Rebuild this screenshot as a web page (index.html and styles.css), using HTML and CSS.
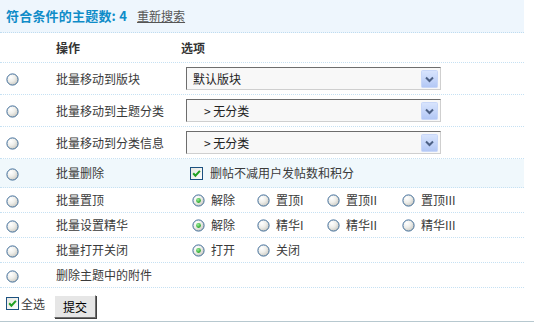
FILE: index.html
```html
<!DOCTYPE html>
<html lang="zh-CN">
<head>
<meta charset="utf-8">
<title>批量管理</title>
<link rel="stylesheet" href="styles.css">
</head>
<body>
<svg class="defs" width="0" height="0" aria-hidden="true">
  <defs>
    <radialGradient id="rfill" cx="35%" cy="30%" r="75%">
      <stop offset="0" stop-color="#ffffff"/>
      <stop offset="0.5" stop-color="#eeeeea"/>
      <stop offset="1" stop-color="#c9c8c1"/>
    </radialGradient>
    <radialGradient id="rdot" cx="40%" cy="35%" r="70%">
      <stop offset="0" stop-color="#9ef09e"/>
      <stop offset="1" stop-color="#189a18"/>
    </radialGradient>
    <linearGradient id="cfill" x1="0" y1="0" x2="1" y2="1">
      <stop offset="0" stop-color="#e6e6df"/>
      <stop offset="1" stop-color="#ffffff"/>
    </linearGradient>
    <linearGradient id="afill" x1="0" y1="0" x2="0" y2="1">
      <stop offset="0" stop-color="#d9e5fd"/>
      <stop offset="1" stop-color="#b2c7f5"/>
    </linearGradient>
    <symbol id="radio" viewBox="0 0 13 13">
      <circle cx="6.5" cy="6.5" r="5.6" fill="url(#rfill)" stroke="#3f6c98" stroke-width="1"/>
    </symbol>
    <symbol id="radio-on" viewBox="0 0 13 13">
      <circle cx="6.5" cy="6.5" r="5.6" fill="url(#rfill)" stroke="#3f6c98" stroke-width="1"/>
      <circle cx="6.5" cy="6.5" r="2.4" fill="url(#rdot)"/>
    </symbol>
    <symbol id="check-on" viewBox="0 0 13 13">
      <rect x="0.5" y="0.5" width="12" height="12" fill="url(#cfill)" stroke="#1c5180"/>
      <path d="M3.2 6.3 L5.4 8.7 L9.9 3.9" fill="none" stroke="#21a121" stroke-width="2"/>
    </symbol>
    <symbol id="arrow" viewBox="0 0 17 18">
      <rect x="0.5" y="0.5" width="16" height="17" rx="1" fill="url(#afill)" stroke="#c8d7f8"/>
      <path d="M5 7.5 L8.5 11 L12 7.5" fill="none" stroke="#4d6185" stroke-width="2"/>
    </symbol>
  </defs>
</svg>
<div class="page">
  <form class="panel">
    <div class="title">
      <strong>符合条件的主题数: 4</strong>
      <a href="#">重新搜索</a>
    </div>

    <div class="row head">
      <span></span>
      <span>操作</span>
      <span class="head-opts">选项</span>
    </div>

    <div class="row tall">
      <span class="pick"><svg class="radio"><use href="#radio"/></svg></span>
      <span class="label">批量移动到版块</span>
      <span class="opts">
        <span class="select"><span class="val">默认版块</span><svg class="arrow"><use href="#arrow"/></svg></span>
      </span>
    </div>

    <div class="row tall">
      <span class="pick"><svg class="radio"><use href="#radio"/></svg></span>
      <span class="label">批量移动到主题分类</span>
      <span class="opts">
        <span class="select"><span class="val indent">&gt; 无分类</span><svg class="arrow"><use href="#arrow"/></svg></span>
      </span>
    </div>

    <div class="row tall">
      <span class="pick"><svg class="radio"><use href="#radio"/></svg></span>
      <span class="label">批量移动到分类信息</span>
      <span class="opts">
        <span class="select"><span class="val indent">&gt; 无分类</span><svg class="arrow"><use href="#arrow"/></svg></span>
      </span>
    </div>

    <div class="row mid hl">
      <span class="pick"><svg class="radio"><use href="#radio"/></svg></span>
      <span class="label">批量删除</span>
      <span class="opts">
        <span class="chk"><svg class="check"><use href="#check-on"/></svg>删帖不减用户发帖数和积分</span>
      </span>
    </div>

    <div class="row">
      <span class="pick"><svg class="radio"><use href="#radio"/></svg></span>
      <span class="label">批量置顶</span>
      <span class="opts radios">
        <span class="opt w1"><svg class="radio"><use href="#radio-on"/></svg>解除</span>
        <span class="opt w2"><svg class="radio"><use href="#radio"/></svg>置顶I</span>
        <span class="opt w3"><svg class="radio"><use href="#radio"/></svg>置顶II</span>
        <span class="opt"><svg class="radio"><use href="#radio"/></svg>置顶III</span>
      </span>
    </div>

    <div class="row">
      <span class="pick"><svg class="radio"><use href="#radio"/></svg></span>
      <span class="label">批量设置精华</span>
      <span class="opts radios">
        <span class="opt w1"><svg class="radio"><use href="#radio-on"/></svg>解除</span>
        <span class="opt w2"><svg class="radio"><use href="#radio"/></svg>精华I</span>
        <span class="opt w3"><svg class="radio"><use href="#radio"/></svg>精华II</span>
        <span class="opt"><svg class="radio"><use href="#radio"/></svg>精华III</span>
      </span>
    </div>

    <div class="row">
      <span class="pick"><svg class="radio"><use href="#radio"/></svg></span>
      <span class="label">批量打开关闭</span>
      <span class="opts radios">
        <span class="opt w1"><svg class="radio"><use href="#radio-on"/></svg>打开</span>
        <span class="opt"><svg class="radio"><use href="#radio"/></svg>关闭</span>
      </span>
    </div>

    <div class="row">
      <span class="pick"><svg class="radio"><use href="#radio"/></svg></span>
      <span class="label">删除主题中的附件</span>
      <span class="opts"></span>
    </div>

    <div class="footer">
      <span class="all"><svg class="check"><use href="#check-on"/></svg>全选</span>
      <button type="button" class="btn">提交</button>
    </div>
  </form>
</div>
</body>
</html>
```

FILE: styles.css
```css
html, body {
  margin: 0;
  padding: 0;
  background: #fff;
}

body {
  font-family: "Noto Sans CJK SC", "Noto Sans", sans-serif;
  font-size: 12px;
  line-height: 14px;
  color: #3a3a3a;
}

.defs {
  display: block;
  width: 0;
  height: 0;
  overflow: hidden;
}

.page {
  border-bottom: 1px solid #b7c8cf;
}

.panel {
  width: 524px;
  margin: 0;
}

.title {
  height: 32px;
  display: flex;
  align-items: center;
  padding-left: 6px;
  background: #eef6fd;
  border-bottom: 1px dotted #bfdcf0;
}

.title strong {
  font-size: 13px;
  font-weight: bold;
  color: #0f8cc8;
  letter-spacing: 0.2px;
  margin-right: 10px;
}

.title a {
  color: #555;
  text-decoration: underline;
}

.row {
  display: grid;
  grid-template-columns: 56px 130px 1fr;
  align-items: center;
  height: 24px;
  border-bottom: 1px dotted #c6e1f3;
}

.row.head {
  height: 29px;
  font-weight: bold;
  color: #333;
}

.head-opts {
  margin-left: -5px;
}

.row.tall {
  height: 31px;
}

.row.mid {
  height: 28px;
}

.row.hl {
  background: #f0f8fc;
}

.pick {
  display: flex;
  align-items: center;
  padding-left: 6px;
  padding-top: 2px;
}

.radio {
  width: 13px;
  height: 13px;
  flex: none;
  display: block;
}

.check {
  width: 13px;
  height: 13px;
  flex: none;
  display: block;
}

.opts {
  display: flex;
  align-items: center;
}

.select {
  width: 255px;
  height: 23px;
  box-sizing: border-box;
  display: flex;
  align-items: center;
  border: 1px solid;
  border-color: #6d6d6d #cfcfcf #cfcfcf #6d6d6d;
  background: #f8f8f8;
  padding: 0 2px 0 6px;
  color: #222;
}

.select .val {
  flex: 1;
}

.select .indent {
  padding-left: 11px;
}

.arrow {
  width: 17px;
  height: 18px;
  flex: none;
  display: block;
}

.chk {
  display: flex;
  align-items: center;
  gap: 7px;
  padding-left: 4px;
}

.radios {
  padding-left: 6px;
}

.opt {
  display: flex;
  align-items: center;
  gap: 6px;
}

.opt.w1 {
  width: 65px;
}

.opt.w2 {
  width: 70px;
}

.opt.w3 {
  width: 75px;
}

.footer {
  height: 33px;
  display: flex;
  align-items: center;
  padding-left: 6px;
}

.all {
  display: flex;
  align-items: center;
  gap: 2px;
  margin-top: -2px;
}

.btn {
  margin-left: 9px;
  margin-top: 4px;
  width: 42px;
  height: 23px;
  padding: 0;
  font-family: inherit;
  font-size: 12px;
  color: #000;
  background: #e6e6e6;
  border: 1px solid;
  border-color: #fff #6e6e6e #6e6e6e #fff;
  box-shadow: 1px 1px 0 #404040;
  border-radius: 0;
}
```
